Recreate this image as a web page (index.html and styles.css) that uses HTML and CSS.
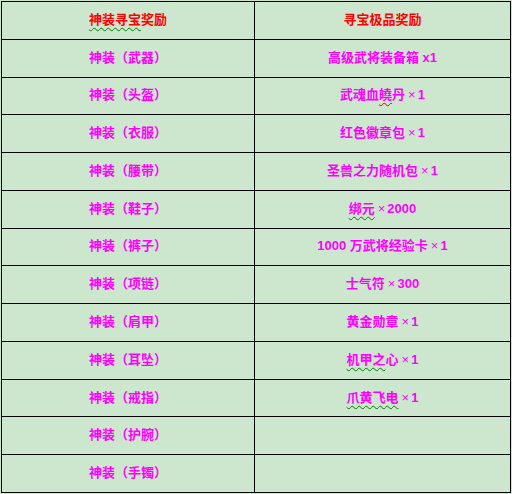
FILE: index.html
```html
<!DOCTYPE html>
<html>
<head>
<meta charset="utf-8">
<link rel="stylesheet" href="styles.css">
</head>
<body>
<div class="table">
  <div class="cell head"><span class="wavy">神装寻宝</span>奖励</div>
  <div class="cell head">寻宝极品奖励</div>
  <div class="cell">神装（武器）</div>
  <div class="cell">高级武将装备箱 x1</div>
  <div class="cell">神装（头盔）</div>
  <div class="cell">武魂血<span class="wavy red">皢</span>丹<span class="x">×</span>1</div>
  <div class="cell">神装（衣服）</div>
  <div class="cell">红色徽章包<span class="x">×</span>1</div>
  <div class="cell">神装（腰带）</div>
  <div class="cell">圣兽之力随机包<span class="x">×</span>1</div>
  <div class="cell">神装（鞋子）</div>
  <div class="cell"><span class="wavy">绑元</span><span class="x">×</span>2000</div>
  <div class="cell">神装（裤子）</div>
  <div class="cell">1000 万武将经验卡<span class="x">×</span>1</div>
  <div class="cell">神装（项链）</div>
  <div class="cell">士气符<span class="x">×</span>300</div>
  <div class="cell">神装（肩甲）</div>
  <div class="cell">黄金勋章<span class="x">×</span>1</div>
  <div class="cell">神装（耳坠）</div>
  <div class="cell"><span class="wavy">机甲之</span>心<span class="x">×</span>1</div>
  <div class="cell">神装（戒指）</div>
  <div class="cell"><span class="wavy">爪黄飞电</span><span class="x">×</span>1</div>
  <div class="cell">神装（护腕）</div>
  <div class="cell"></div>
  <div class="cell">神装（手镯）</div>
  <div class="cell"></div>
</div>
</body>
</html>
```

FILE: styles.css
```css
html, body {
  margin: 0;
  padding: 0;
  background: #cde7ce;
}
body {
  padding: 1px;
  font-family: "Liberation Sans", "Noto Sans CJK SC", sans-serif;
  font-size: 13px;
  font-weight: bold;
}
.table {
  display: grid;
  grid-template-columns: 252px 255px;
  grid-template-rows: repeat(13, 1fr);
  gap: 1px;
  padding: 1px;
  background: #000;
  width: 510px;
  height: 492px;
  box-sizing: border-box;
}
.cell {
  background: #cde7ce;
  color: #ff00ff;
  display: flex;
  align-items: center;
  justify-content: center;
  white-space: nowrap;
  line-height: 1;
  padding-bottom: 2px;
}
.head {
  color: #ff0000;
}
.x {
  font-weight: normal;
  padding: 0 2px 0 3px;
}
.wavy {
  text-decoration: underline wavy #008000;
  text-decoration-thickness: 1px;
  text-underline-offset: 3px;
}
.wavy.red {
  text-decoration-color: #e00000;
}
```
